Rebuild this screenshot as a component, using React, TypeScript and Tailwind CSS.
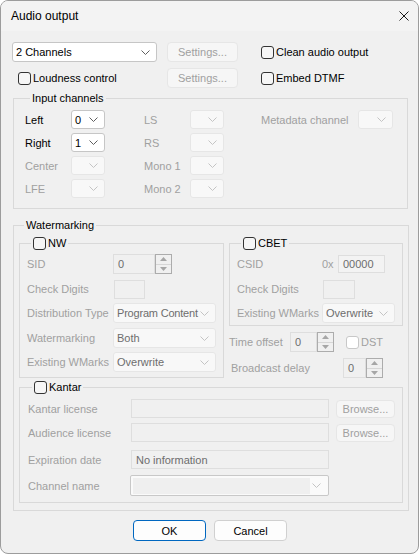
import React from 'react';
import clsx from 'clsx';

const Chevron = ({ on }: { on?: boolean }) => (
  <svg width="9" height="5" viewBox="0 0 9 5" className="shrink-0">
    <polyline points="0.5,0.5 4.5,4.5 8.5,0.5" fill="none" stroke={on ? '#5f5f5f' : '#c4c4c4'} strokeWidth="1" />
  </svg>
);

const Combo = ({ className, value, on, tight }: { className: string; value?: string; on?: boolean; tight?: boolean }) => (
  <div
    className={clsx(
      'flex items-center justify-between rounded-[3px] border pl-[3px] pr-[6px]',
      on ? 'border-[#c6c6c6] bg-white text-black' : 'border-[#e6e6e6] bg-[#f8f8f8] text-[#6d6d6d]',
      className
    )}
  >
    <span className={clsx('whitespace-nowrap', tight && 'tracking-[-0.2px]')}>{value}</span>
    <Chevron on={on} />
  </div>
);

const Box = ({ className, value }: { className: string; value?: string }) => (
  <div className={clsx('flex items-center border border-[#dedede] bg-[#f0f0f0] pl-[4px] text-[#6d6d6d]', className)}>
    {value}
  </div>
);

const Arrow = ({ up }: { up?: boolean }) => (
  <svg width="7" height="4" viewBox="0 0 7 4">
    <polygon points={up ? '0,4 7,4 3.5,0' : '0,0 7,0 3.5,4'} fill="#a6a6a6" />
  </svg>
);

const Spin = ({ editClass, value }: { editClass: string; value: string }) => (
  <div className="flex h-[20px]">
    <Box className={clsx('h-full', editClass)} value={value} />
    <div className="flex h-full w-[17px] flex-col border border-[#acacac] bg-[#f0f0f0]">
      <div className="flex flex-1 items-center justify-center border-b border-[#d6d6d6]">
        <Arrow up />
      </div>
      <div className="flex flex-1 items-center justify-center">
        <Arrow />
      </div>
    </div>
  </div>
);

const Check = ({ label, on = true }: { label: string; on?: boolean }) => (
  <div className="flex items-center gap-[2px]">
    <span
      className={clsx(
        'h-[13px] w-[13px] shrink-0 rounded-[3px] border',
        on ? 'border-[#333333] bg-[#f6f6f6]' : 'border-[#c8c8c8] bg-white'
      )}
    />
    <span className={on ? 'text-black' : 'text-[#a0a0a0]'}>{label}</span>
  </div>
);

const DisabledButton = ({ className, label }: { className: string; label: string }) => (
  <div
    className={clsx(
      'flex items-center justify-center rounded-[4px] border border-[#e6e6e6] bg-[#f6f6f6] text-[#a0a0a0]',
      className
    )}
  >
    {label}
  </div>
);

const Label = ({ className, children, on }: { className: string; children: React.ReactNode; on?: boolean }) => (
  <span className={clsx('shrink-0 whitespace-nowrap', on ? 'text-black' : 'text-[#a0a0a0]', className)}>{children}</span>
);

export default function App() {
  return (
    <div className="h-[554px] w-[419px] overflow-hidden rounded-[8px] border border-[#9c9c9c] bg-[#f0f0f0] font-['Liberation_Sans',Arial,sans-serif] text-[11px] leading-[16px] text-black">
      {/* Title bar */}
      <div className="flex h-[30px] items-center justify-between bg-[#f3f3f3] pl-[10px] pr-[9px]">
        <span className="text-[12px]">Audio output</span>
        <svg width="10" height="10" viewBox="0 0 10 10">
          <path d="M0.5 0.5 L9.5 9.5 M9.5 0.5 L0.5 9.5" stroke="#1a1a1a" strokeWidth="1" />
        </svg>
      </div>

      <div className="pl-[11px] pr-[10px]">
        {/* Top controls */}
        <div className="mt-[11px] grid grid-cols-[155px_94px_1fr] grid-rows-[20px_20px] items-center gap-y-[6px]">
          <Combo className="h-[20px] w-[145px]" value="2 Channels" on />
          <DisabledButton className="h-[20px] w-[71px]" label="Settings..." />
          <Check label="Clean audio output" />
          <div className="pl-[6px]">
            <Check label="Loudness control" />
          </div>
          <DisabledButton className="h-[20px] w-[71px]" label="Settings..." />
          <Check label="Embed DTMF" />
        </div>

        {/* Input channels */}
        <fieldset className="ml-[1px] mt-[2px] border border-[#d9d9d9] pb-[10px] pl-[11px] pt-[4px]">
          <legend className="ml-[5px] px-[2px]">Input channels</legend>
          <div className="flex flex-col gap-[4px]">
            <div className="flex h-[19px] items-center">
              <Label className="w-[46px]" on>Left</Label>
              <Combo className="h-[19px] w-[34px]" value="0" on />
              <Label className="ml-[39px] w-[46px]">LS</Label>
              <Combo className="h-[19px] w-[34px]" />
              <Label className="ml-[37px] w-[97px]">Metadata channel</Label>
              <Combo className="h-[19px] w-[35px]" />
            </div>
            <div className="flex h-[19px] items-center">
              <Label className="w-[46px]" on>Right</Label>
              <Combo className="h-[19px] w-[34px]" value="1" on />
              <Label className="ml-[39px] w-[46px]">RS</Label>
              <Combo className="h-[19px] w-[34px]" />
            </div>
            <div className="flex h-[19px] items-center">
              <Label className="w-[46px]">Center</Label>
              <Combo className="h-[19px] w-[34px]" />
              <Label className="ml-[39px] w-[46px]">Mono 1</Label>
              <Combo className="h-[19px] w-[34px]" />
            </div>
            <div className="flex h-[19px] items-center">
              <Label className="w-[46px]">LFE</Label>
              <Combo className="h-[19px] w-[34px]" />
              <Label className="ml-[39px] w-[46px]">Mono 2</Label>
              <Combo className="h-[19px] w-[34px]" />
            </div>
          </div>
        </fieldset>

        {/* Watermarking */}
        <fieldset className="ml-[1px] mt-[8px] border border-[#d9d9d9] px-[5px] pb-[7px]">
          <legend className="ml-[5px] px-[2px]">Watermarking</legend>
          <div className="mt-[2px] flex items-start gap-[5px]">
            {/* NW */}
            <fieldset className="w-[205px] border border-[#d9d9d9] pb-[5px] pl-[7px] pt-[3px]">
              <legend className="ml-[4px] px-[2px]">
                <Check label="NW" />
              </legend>
              <div className="flex h-[20px] items-center">
                <Label className="w-[86px]">SID</Label>
                <Spin editClass="w-[42px]" value="0" />
              </div>
              <div className="mt-[5px] flex h-[20px] items-center">
                <Label className="w-[86px]">Check Digits</Label>
                <Box className="ml-[1px] h-[19px] w-[31px]" />
              </div>
              <div className="mt-[4px] flex h-[20px] items-center">
                <Label className="w-[86px]">Distribution Type</Label>
                <Combo className="h-[20px] w-[103px]" value="Program Content" tight />
              </div>
              <div className="mt-[5px] flex h-[20px] items-center">
                <Label className="w-[86px]">Watermarking</Label>
                <Combo className="h-[20px] w-[103px]" value="Both" />
              </div>
              <div className="mt-[4px] flex h-[20px] items-center">
                <Label className="w-[86px]">Existing WMarks</Label>
                <Combo className="h-[20px] w-[103px]" value="Overwrite" />
              </div>
            </fieldset>

            <div className="flex w-[174px] flex-col">
              {/* CBET */}
              <fieldset className="border border-[#d9d9d9] pb-[2px] pl-[7px] pt-[3px]">
                <legend className="ml-[4px] px-[2px]">
                  <Check label="CBET" />
                </legend>
                <div className="flex h-[20px] items-center">
                  <Label className="w-[85px]">CSID</Label>
                  <Label className="w-[16px]">0x</Label>
                  <Box className="h-[18px] w-[47px] bg-[#f3f3f3]" value="00000" />
                </div>
                <div className="mt-[5px] flex h-[20px] items-center">
                  <Label className="w-[85px]">Check Digits</Label>
                  <Box className="ml-[1px] h-[19px] w-[32px]" />
                </div>
                <div className="mt-[4px] flex h-[20px] items-center">
                  <Label className="w-[85px]">Existing WMarks</Label>
                  <Combo className="h-[20px] w-[73px]" value="Overwrite" />
                </div>
              </fieldset>

              <div className="mt-[6px] flex h-[20px] items-center">
                <Label className="w-[61px]">Time offset</Label>
                <Spin editClass="w-[27px]" value="0" />
                <div className="ml-[12px]">
                  <Check label="DST" on={false} />
                </div>
              </div>
              <div className="mt-[6px] flex h-[20px] items-center">
                <Label className="w-[114px] pl-[2px]">Broadcast delay</Label>
                <Spin editClass="w-[23px]" value="0" />
              </div>
            </div>
          </div>

          {/* Kantar */}
          <fieldset className="mt-[1px] border border-[#d9d9d9] pb-[6px] pl-[8px] pt-[4px]">
            <legend className="ml-[4px] px-[2px]">
              <Check label="Kantar" />
            </legend>
            <div className="flex h-[19px] items-center">
              <Label className="w-[103px]">Kantar license</Label>
              <Box className="h-[19px] w-[198px]" />
              <DisabledButton className="ml-[7px] h-[18px] w-[59px]" label="Browse..." />
            </div>
            <div className="mt-[5px] flex h-[19px] items-center">
              <Label className="w-[103px]">Audience license</Label>
              <Box className="h-[19px] w-[198px]" />
              <DisabledButton className="ml-[7px] h-[18px] w-[59px]" label="Browse..." />
            </div>
            <div className="mt-[8px] flex h-[19px] items-center">
              <Label className="w-[103px]">Expiration date</Label>
              <Box className="h-[19px] w-[198px]" value="No information" />
            </div>
            <div className="mt-[6px] flex h-[21px] items-center">
              <Label className="w-[102px]">Channel name</Label>
              <div className="flex h-[21px] w-[199px] items-center justify-between rounded-[2px] border border-[#c8c8c8] bg-[#fafafa] pl-[2px] pr-[7px]">
                <div className="h-[16px] w-[177px] bg-[#efefef]" />
                <Chevron />
              </div>
            </div>
          </fieldset>
        </fieldset>

        {/* Buttons */}
        <div className="mt-[9px] flex justify-center gap-[8px]">
          <button className="h-[21px] w-[73px] rounded-[4px] border border-[#0067c0] bg-[#fdfdfd] text-[11px]">OK</button>
          <button className="h-[21px] w-[73px] rounded-[4px] border border-[#d0d0d0] bg-[#fdfdfd] text-[11px]">Cancel</button>
        </div>
      </div>
    </div>
  );
}
